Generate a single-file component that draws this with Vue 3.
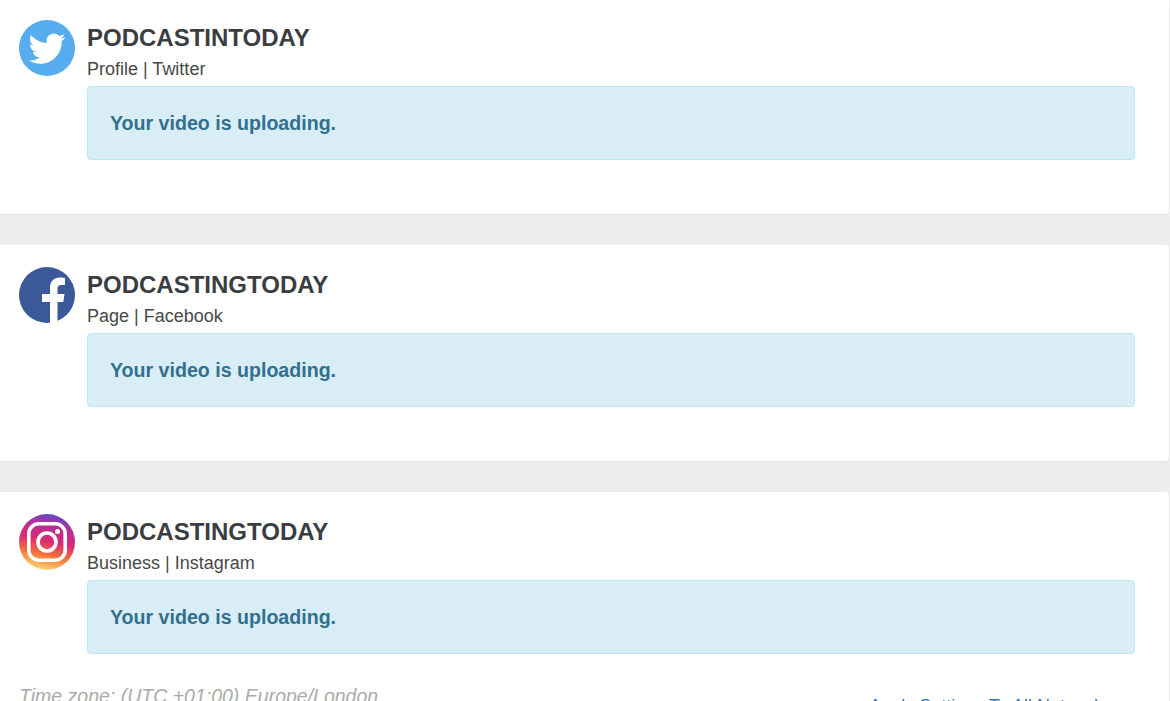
<script setup>
const accounts = [
  { name: 'PODCASTINTODAY', meta: 'Profile | Twitter', icon: 'twitter' },
  { name: 'PODCASTINGTODAY', meta: 'Page | Facebook', icon: 'facebook' },
  { name: 'PODCASTINGTODAY', meta: 'Business | Instagram', icon: 'instagram' },
]
</script>

<template>
  <div class="page">
    <section v-for="(item, i) in accounts" :key="i" class="card" :class="{ last: i === accounts.length - 1 }">
      <div class="row">
        <svg v-if="item.icon === 'twitter'" class="icon" width="56" height="56" viewBox="0 0 56 56">
          <circle cx="28" cy="28" r="28" fill="#55acee" />
          <g transform="translate(9.5 10.2) scale(1.54)">
            <path fill="#fff" d="M23.953 4.57a10 10 0 01-2.825.775 4.958 4.958 0 002.163-2.723c-.951.555-2.005.959-3.127 1.184a4.92 4.92 0 00-8.384 4.482C7.69 8.095 4.067 6.13 1.64 3.162a4.822 4.822 0 00-.666 2.475c0 1.71.87 3.213 2.188 4.096a4.904 4.904 0 01-2.228-.616v.06a4.923 4.923 0 003.946 4.827 4.996 4.996 0 01-2.212.085 4.936 4.936 0 004.604 3.417 9.867 9.867 0 01-6.102 2.105c-.39 0-.779-.023-1.17-.067a13.995 13.995 0 007.557 2.209c9.053 0 13.998-7.496 13.998-13.985 0-.21 0-.42-.015-.63A9.935 9.935 0 0024 4.59z" />
          </g>
        </svg>
        <svg v-else-if="item.icon === 'facebook'" class="icon" width="56" height="56" viewBox="0 0 56 56">
          <circle cx="28" cy="28" r="28" fill="#3b5998" />
          <path fill="#fff" d="M31 56V35H23V27H31V21C31 14 35 10.5 41 10.5C43.3 10.5 45 10.8 46 11V18H42.5C39.5 18 38.5 19.5 38.5 22V27H45.5L44.3 35H38.5V56Z" />
        </svg>
        <svg v-else class="icon" width="56" height="56" viewBox="0 0 56 56">
          <defs>
            <linearGradient id="ig" x1="0.62" y1="0" x2="0.4" y2="1">
              <stop offset="0" stop-color="#5a4cc6" />
              <stop offset="0.2" stop-color="#b32f9f" />
              <stop offset="0.48" stop-color="#d92b72" />
              <stop offset="0.72" stop-color="#f4703a" />
              <stop offset="1" stop-color="#fed873" />
            </linearGradient>
          </defs>
          <circle cx="28" cy="28" r="28" fill="url(#ig)" />
          <rect x="9.8" y="9.8" width="36.4" height="36.4" rx="10" fill="none" stroke="#fff" stroke-width="3.6" />
          <circle cx="28" cy="28" r="9" fill="none" stroke="#fff" stroke-width="3.6" />
          <circle cx="38.5" cy="17.5" r="2.5" fill="#fff" />
        </svg>
        <div class="body">
          <h3 class="name">{{ item.name }}</h3>
          <div class="meta">{{ item.meta }}</div>
          <div class="alert">Your video is uploading.</div>
        </div>
      </div>
      <div v-if="i === accounts.length - 1" class="foot">
        <span class="zone">Time zone: (UTC +01:00) Europe/London</span>
        <a class="apply">Apply Settings To All Networks</a>
      </div>
    </section>
  </div>
</template>

<style scoped>
.page {
  height: 701px;
  overflow: hidden;
  box-sizing: border-box;
  background: #ededed;
  font-family: "Liberation Sans", Arial, sans-serif;
}

.card {
  box-sizing: border-box;
  height: 218px;
  margin: -3px 0 0 -7px;
  width: 1177px;
  padding: 22px 0 0 25px;
  background: #fff;
  border: 1px solid #ededed;
  border-bottom-color: #e2e2e2;
  border-radius: 5px;
}
.card + .card { margin-top: 29px; }
.card.last { height: 300px; }

.row { display: flex; }
.icon { flex: none; display: block; margin-right: 12px; }
.body { width: 1048px; padding-top: 4px; }

.name {
  margin: 0;
  font-size: 24px;
  line-height: 28px;
  font-weight: 700;
  color: #3a3d42;
}
.meta {
  margin-top: 4px;
  font-size: 18px;
  line-height: 26px;
  color: #484848;
}
.alert {
  box-sizing: border-box;
  height: 74px;
  margin-top: 4px;
  padding: 0 22px;
  display: flex;
  align-items: center;
  background: #d9edf7;
  border: 1px solid #bce8f1;
  border-radius: 4px;
  color: #31708f;
  font-size: 19.6px;
  font-weight: 700;
}

.foot {
  display: flex;
  justify-content: space-between;
  margin-top: 31px;
  font-size: 18px;
  width: 1093px;
}
.zone { color: #aaa; font-style: italic; font-size: 19.5px; }
.apply { color: #337ab7; margin-top: 11px; }
</style>

<style>
html, body { overflow: hidden; }
</style>
